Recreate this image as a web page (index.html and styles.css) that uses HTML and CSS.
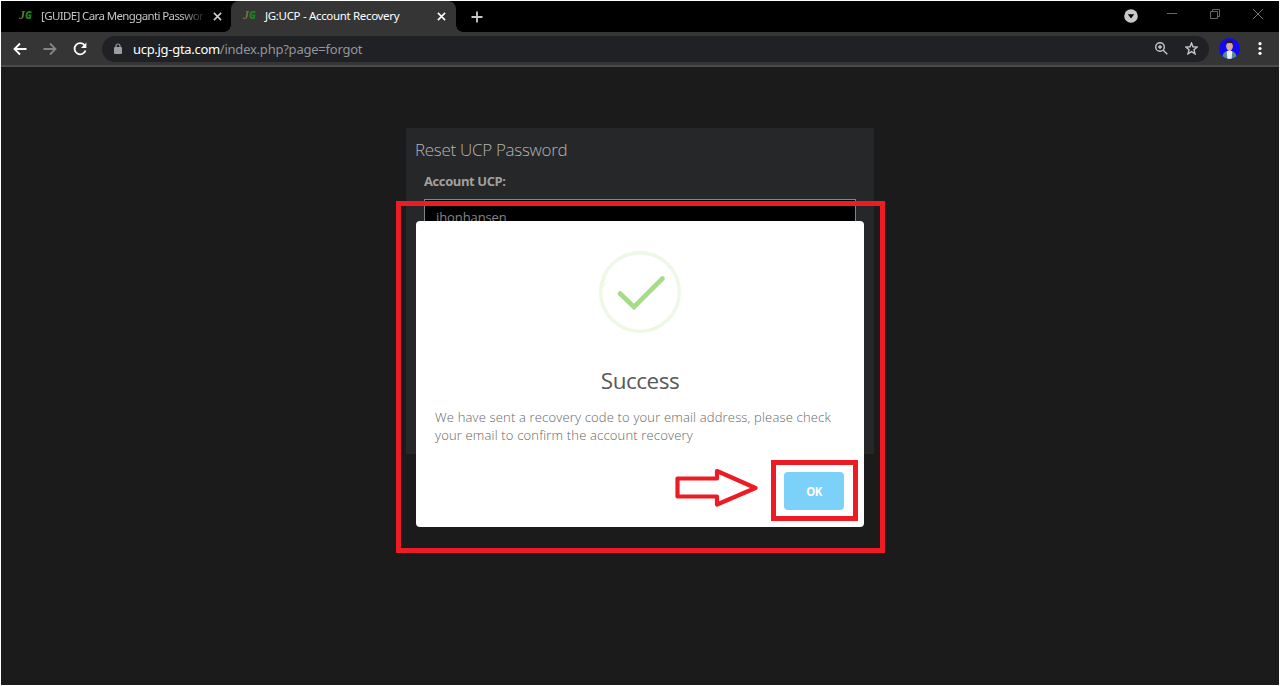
FILE: index.html
```html
<!DOCTYPE html>
<html lang="en">
<head>
    <meta charset="UTF-8">
    <title>JG:UCP - Account Recovery</title>
    <link rel="stylesheet" href="styles.css">
</head>
<body>
    <div class="browser">
        <div class="tab-strip">
            <div class="tab">
                <span class="favicon"><i>J</i><b>G</b></span>
                <span class="tab-title faded">[GUIDE] Cara Mengganti Passwor</span>
                <svg class="tab-close" viewBox="0 0 10 10"><path d="M1 1L9 9M9 1L1 9"/></svg>
            </div>
            <div class="tab active">
                <span class="favicon"><i>J</i><b>G</b></span>
                <span class="tab-title">JG:UCP - Account Recovery</span>
                <svg class="tab-close" viewBox="0 0 10 10"><path d="M1 1L9 9M9 1L1 9"/></svg>
            </div>
            <svg class="new-tab" viewBox="0 0 12 12"><path d="M6 .5V11.5M.5 6H11.5"/></svg>
            <div class="window-controls">
                <svg width="14" height="14" viewBox="0 0 14 14"><circle cx="7" cy="7" r="6.8" fill="#c8c8c8"/><path d="M3.8 5.2H10.2L7 9.5Z" fill="#000"/></svg>
                <svg width="10" height="10" viewBox="0 0 10 10"><path d="M0 4.5H10" stroke="#666"/></svg>
                <svg width="10" height="10" viewBox="0 0 10 10" fill="none" stroke="#666"><path d="M.5 2.5H7.5V9.5H.5ZM2.5 2V.5H9.5V7.5H8"/></svg>
                <svg width="10" height="10" viewBox="0 0 10 10"><path d="M0 0L10 10M10 0L0 10" stroke="#777"/></svg>
            </div>
        </div>
        <div class="toolbar">
            <svg class="nav-icon" viewBox="0 0 14 14"><path d="M13.5 7H2M7 1.5L1.5 7L7 12.5"/></svg>
            <svg class="nav-icon disabled" viewBox="0 0 14 14"><path d="M.5 7H12M7 1.5L12.5 7L7 12.5"/></svg>
            <svg class="nav-icon" viewBox="0 0 14 14"><path d="M11.8 3.6A5.6 5.6 0 1 0 12.5 8.5"/><path d="M13.4 .6V6H8Z" class="solid"/></svg>
            <div class="address-bar">
                <svg class="lock" viewBox="0 0 8 11"><rect y="4" width="8" height="7" rx="1" fill="#9a9da1"/><path d="M2 4.5V3A2 2 0 0 1 6 3V4.5" fill="none" stroke="#9a9da1" stroke-width="1.2"/></svg>
                <span class="url"><span class="host">ucp.jg-gta.com</span><span class="path">/index.php?page=forgot</span></span>
                <svg class="bar-icon" viewBox="0 0 13 13"><circle cx="5" cy="5" r="4.3"/><path d="M8.2 8.2L12.3 12.3M3 5H7M5 3V7"/></svg>
                <svg class="bar-icon star" viewBox="0 0 13 13"><path d="M6.5 1L8 4.8L12.2 5.1L9 7.8L10 11.8L6.5 9.6L3 11.8L4 7.8L.8 5.1L5 4.8Z"/></svg>
            </div>
            <svg class="avatar" viewBox="0 0 20 20">
                <circle cx="10" cy="10" r="10" fill="#1508f5"/>
                <path d="M3.3 17.4Q4 13 8 12.5L10 13.5L12 12.5Q16 13 16.7 17.4A10 10 0 0 1 3.3 17.4" fill="#528b91"/>
                <path d="M7.3 12.5L10 11.5L12.7 12.5L12 19.8H8Z" fill="#f0edf2"/>
                <ellipse cx="10" cy="7.5" rx="3.2" ry="4.7" fill="#d6aa9b"/>
                <path d="M6.5 7Q6 2.2 10 2.2T13.5 7L12.5 5Q10 4.5 7.5 5Z" fill="#241c25"/>
            </svg>
            <svg class="menu-dots" viewBox="0 0 4 13"><circle cx="2" cy="1.7" r="1.6"/><circle cx="2" cy="6.5" r="1.6"/><circle cx="2" cy="11.3" r="1.6"/></svg>
        </div>
        <div class="page">
            <div class="card">
                <h1>Reset UCP Password</h1>
                <label>Account UCP:</label>
                <div class="account-input">jhonhansen</div>
            </div>
            <div class="modal">
                <svg class="success-icon" viewBox="0 0 82 82">
                    <circle cx="41" cy="41" r="39.3" stroke="#edf8e6" stroke-width="3.4"/>
                    <path d="M2.7 37L5.8 32M3.2 32L6.3 27M52 79L57 76M57 77.5L60 75" stroke="#dff1d4" stroke-width=".8"/>
                    <path d="M21 42.5L35 56L63.5 27.5" stroke="#a5dc86" stroke-width="4.6" stroke-linecap="round"/>
                </svg>
                <h2>Success</h2>
                <p>We have sent a recovery code to your email address, please check<br>your email to confirm the account recovery</p>
                <button class="ok-button">OK</button>
            </div>
            <div class="mark mark-modal"></div>
            <div class="mark mark-button"></div>
            <svg class="mark-arrow" viewBox="0 0 84 40"><path d="M3.5 10.5H43V3L81.5 20L43 36.5V28.5H3.5Z"/></svg>
        </div>
    </div>
</body>
</html>
```
FILE: styles.css
```css
* {
    margin: 0;
    padding: 0;
    box-sizing: border-box;
}

body {
    height: 686px;
    overflow: hidden;
    background: #fff;
    font-family: "Open Sans", "Noto Sans", sans-serif;
}

svg {
    flex-shrink: 0;
}

.browser {
    height: 686px;
    border: 1px solid #fff;
    background: #1b1b1b;
    display: flex;
    flex-direction: column;
}

.tab-strip {
    height: 31px;
    background: #000;
    display: flex;
    align-items: center;
}

.tab {
    width: 230px;
    height: 31px;
    padding: 0 9px 1px 18px;
    display: flex;
    align-items: center;
    position: relative;
    color: #c5c5c5;
}

.tab.active {
    width: 225px;
    padding-left: 12px;
    padding-right: 10px;
    background: #353535;
    border-radius: 8px 8px 0 0;
    color: #fff;
}

.tab.active::before,
.tab.active::after {
    content: "";
    position: absolute;
    bottom: 0;
    width: 7px;
    height: 7px;
}

.tab.active::before {
    left: -7px;
    background: radial-gradient(circle at 0 0, #000 6.5px, #353535 7px);
}

.tab.active::after {
    right: -7px;
    background: radial-gradient(circle at 100% 0, #000 6.5px, #353535 7px);
}

.favicon {
    width: 22px;
    padding-bottom: 1px;
    font: italic bold 12px "Liberation Serif", serif;
    color: #17851e;
}

.favicon i {
    color: #77723a;
}

.favicon b {
    font-family: "Open Sans", sans-serif;
    font-size: 10px;
}

.tab-title {
    flex: 1;
    padding-bottom: 2px;
    font-family: "Noto Sans", sans-serif;
    font-size: 11.5px;
    letter-spacing: -0.33px;
    white-space: nowrap;
}

.faded {
    flex: none;
    width: 163px;
    margin-right: 9px;
    letter-spacing: -0.62px;
    -webkit-mask-image: linear-gradient(to right, #000 140px, transparent 166px);
    mask-image: linear-gradient(to right, #000 140px, transparent 166px);
}

.tab-close {
    width: 9px;
    height: 9px;
    stroke: #d0d0d0;
    stroke-width: 1.7;
}

.active .tab-close {
    stroke: #fff;
}

.new-tab {
    width: 12px;
    height: 12px;
    margin-left: 15px;
    stroke: #c9c9c9;
    stroke-width: 1.8;
}

.window-controls {
    margin-left: auto;
    margin-right: 16px;
    display: flex;
    align-items: center;
    gap: 33px;
    padding-bottom: 5px;
}

.window-controls svg:first-child {
    position: relative;
    top: 2px;
    margin-right: -4px;
}

.toolbar {
    height: 35px;
    padding: 0 17px 0 12px;
    background: #353535;
    border-bottom: 2px solid #4b4b4b;
    display: flex;
    align-items: center;
}

.nav-icon {
    width: 14px;
    height: 14px;
    margin-right: 16px;
    fill: none;
    stroke: #fff;
    stroke-width: 1.8;
}

.nav-icon.disabled {
    stroke: #858585;
}

.nav-icon .solid {
    fill: #fff;
    stroke: none;
}

.address-bar {
    height: 26px;
    margin-left: -1px;
    width: 1107px;
    padding: 0 11px 0 12px;
    border-radius: 13px;
    background: #202124;
    display: flex;
    align-items: center;
}

.lock {
    width: 8px;
    height: 11px;
    margin-right: 11px;
}

.url {
    flex: 1;
    font-family: "Noto Sans", sans-serif;
    font-size: 13px;
    white-space: nowrap;
}

.host {
    color: #fff;
    letter-spacing: -0.3px;
}

.path {
    color: #92959a;
    letter-spacing: -0.23px;
}

.bar-icon {
    width: 13px;
    height: 13px;
    margin-left: 17px;
    fill: none;
    stroke: #c3c5c8;
    stroke-width: 1.4;
}

.avatar {
    width: 21px;
    height: 21px;
    margin-left: 10px;
}

.menu-dots {
    width: 4px;
    height: 13px;
    margin-left: auto;
    fill: #fff;
}

.page {
    flex: 1;
    position: relative;
}

.card {
    width: 468px;
    height: 326px;
    margin: 61px auto 0;
    padding: 9px 18px;
    background: #262728;
}

.card h1 {
    margin-left: -9px;
    font-size: 17px;
    font-weight: 300;
    line-height: 25px;
    letter-spacing: -0.3px;
    color: #b4b4b4;
}

.card label {
    display: block;
    margin-top: 9px;
    font-size: 13px;
    font-weight: 700;
    line-height: 20px;
    letter-spacing: -0.4px;
    color: #a0a0a0;
}

.account-input {
    height: 40px;
    margin-top: 8px;
    padding: 6px 11px;
    border: 1px solid #858585;
    background: #000;
    font-size: 13px;
    line-height: 22px;
    letter-spacing: -0.1px;
    color: #858585;
}

.modal {
    position: absolute;
    top: 154px;
    left: 415px;
    width: 448px;
    height: 306px;
    padding: 30px 19px;
    border-radius: 4px;
    background: #fff;
    display: flex;
    flex-direction: column;
}

.success-icon {
    width: 82px;
    height: 82px;
    align-self: center;
    fill: none;
}

.modal h2 {
    margin-top: 32px;
    font-size: 22.5px;
    font-weight: 400;
    line-height: 32px;
    letter-spacing: -0.5px;
    text-align: center;
    color: #595959;
}

.modal p {
    margin-top: 11px;
    font-size: 13px;
    font-weight: 300;
    line-height: 18px;
    letter-spacing: 0.17px;
    white-space: nowrap;
    color: #666;
}

.ok-button {
    width: 60px;
    height: 38px;
    margin: 28px 1px 0 auto;
    flex-shrink: 0;
    border: none;
    border-radius: 4px;
    background: #7cd1f9;
    color: #fff;
    font: bold 11.5px "Open Sans", sans-serif;
    letter-spacing: -0.6px;
}

/* red highlights drawn over the page */
.mark {
    position: absolute;
    border: 5px solid #ed1c24;
}

.mark-modal {
    top: 134px;
    left: 395px;
    width: 489px;
    height: 352px;
}

.mark-button {
    top: 393px;
    left: 770px;
    width: 87px;
    height: 61px;
}

.mark-arrow {
    position: absolute;
    top: 401px;
    left: 673px;
    width: 84px;
    height: 40px;
    fill: none;
    stroke: #ed1c24;
    stroke-width: 4.2;
    stroke-linejoin: round;
}
```
